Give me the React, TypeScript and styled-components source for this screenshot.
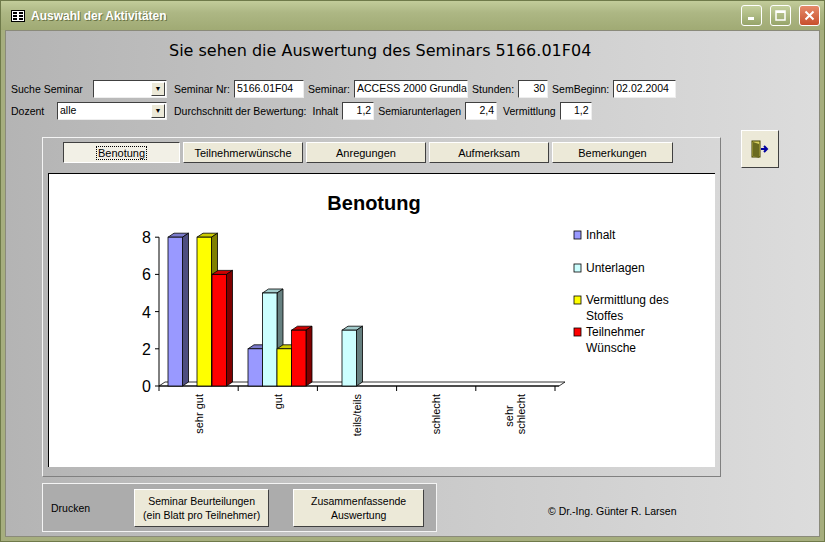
import React from 'react';
import styled, { createGlobalStyle } from 'styled-components';

const Global = createGlobalStyle`
    html, body { margin: 0; padding: 0; }
    body { font-family: "Liberation Sans", Arial, sans-serif; font-size: 10.5px; color: #000; }
`;

const Window = styled.div`
    width: 825px;
    height: 542px;
    box-sizing: border-box;
    background: #a6ae7e;
    border: 1px solid #6f7a4a;
    display: flex;
    flex-direction: column;
`;

const TitleBar = styled.div`
    height: 29px;
    flex: none;
    display: flex;
    align-items: center;
    padding: 0 4px 0 10px;
    background: linear-gradient(#c2cc9a, #adb784 40%, #a0aa74);
    color: #fff;
    font-weight: bold;
    font-size: 12px;
    text-shadow: 1px 1px 0 #6b7446;
    gap: 6px;
`;

const TitleText = styled.span`
    flex: 1;
`;

const CtlButton = styled.div<{ $close?: boolean }>`
    width: 21px;
    height: 21px;
    box-sizing: border-box;
    border: 1px solid #fff;
    border-radius: 3px;
    margin-left: 2px;
    background: ${p => (p.$close ? 'linear-gradient(#e58a6a, #c8502c)' : 'linear-gradient(#c4cf9c, #96a46a)')};
    display: flex;
    align-items: center;
    justify-content: center;
`;

const Body = styled.div`
    flex: 1;
    margin: 0 4px 4px 4px;
    border: 1px solid #8a8a7a;
    background: linear-gradient(90deg, #b4b4b4, #c9c9c9 50%, #dcdcdc);
    padding: 8px 0 0 5px;
    display: flex;
    flex-direction: column;
`;

const Heading = styled.div`
    font-family: "DejaVu Sans", sans-serif;
    font-size: 16px;
    margin: 2px 0 0 158px;
    height: 28px;
`;

const FieldRow = styled.div<{ $top: number }>`
    display: flex;
    align-items: center;
    gap: 4px;
    height: 19px;
    margin-top: ${p => p.$top}px;
`;

const Label = styled.span<{ $w?: number }>`
    width: ${p => (p.$w ? p.$w + 'px' : 'auto')};
    white-space: nowrap;
`;

const Input = styled.div<{ $w: number; $right?: boolean }>`
    width: ${p => p.$w}px;
    height: 18px;
    box-sizing: border-box;
    background: #fff;
    border-top: 1px solid #404040;
    border-left: 1px solid #404040;
    border-right: 1px solid #eeeeee;
    border-bottom: 1px solid #eeeeee;
    padding: 1px 2px;
    text-align: ${p => (p.$right ? 'right' : 'left')};
    overflow: hidden;
    white-space: nowrap;
`;

const Combo = styled(Input)`
    display: flex;
    justify-content: space-between;
    padding-right: 1px;
`;

const ComboArrow = styled.div`
    width: 14px;
    height: 14px;
    background: #ece9d8;
    border: 1px solid #fff;
    border-right-color: #404040;
    border-bottom-color: #404040;
    box-sizing: border-box;
    display: flex;
    align-items: center;
    justify-content: center;
    font-size: 7px;
`;

const Middle = styled.div`
    display: flex;
    margin-top: 17px;
    margin-left: 31px;
    gap: 20px;
`;

const TabFrame = styled.div`
    width: 679px;
    height: 340px;
    box-sizing: border-box;
    border: 1px solid #f4f4f4;
    border-right-color: #808080;
    border-bottom-color: #808080;
    padding: 4px 5px 0 5px;
    display: flex;
    flex-direction: column;
`;

const Tabs = styled.div`
    display: flex;
    gap: 3px;
    margin-left: 15px;
    height: 21px;
`;

const Tab = styled.div<{ $active?: boolean; $w: number }>`
    width: ${p => p.$w}px;
    height: 21px;
    box-sizing: border-box;
    background: ${p => (p.$active ? '#f2f0e6' : '#ece9d8')};
    border: 1px solid ${p => (p.$active ? '#404040' : '#fff')};
    border-right-color: ${p => (p.$active ? '#fff' : '#404040')};
    border-bottom-color: ${p => (p.$active ? '#fff' : '#404040')};
    display: flex;
    align-items: center;
    justify-content: center;
    font-size: 11px;
    span {
        outline: ${p => (p.$active ? '1px dotted #000' : 'none')};
        padding: 0 1px;
    }
`;

const ChartArea = styled.div`
    margin-top: 10px;
    width: 667px;
    height: 294px;
    background: #fff;
    box-sizing: border-box;
    border-top: 1px solid #000;
    border-left: 1px solid #000;
`;

const ExitButton = styled.div`
    width: 38px;
    height: 38px;
    margin-top: -7px;
    box-sizing: border-box;
    background: #ece9d8;
    border: 1px solid #fff;
    border-right-color: #404040;
    border-bottom-color: #404040;
    display: flex;
    align-items: center;
    justify-content: center;
`;

const Bottom = styled.div`
    display: flex;
    align-items: center;
    margin: 6px 0 0 31px;
`;

const PrintFrame = styled.div`
    width: 395px;
    height: 49px;
    box-sizing: border-box;
    border: 1px solid #f4f4f4;
    background: #acacac;
    display: flex;
    align-items: center;
    padding-left: 8px;
`;

const PushButton = styled.div<{ $w: number; $ml: number }>`
    width: ${p => p.$w}px;
    height: 38px;
    margin-left: ${p => p.$ml}px;
    box-sizing: border-box;
    background: #ece9d8;
    border: 1px solid #fff;
    border-right-color: #404040;
    border-bottom-color: #404040;
    display: flex;
    align-items: center;
    justify-content: center;
    text-align: center;
    line-height: 14px;
`;

const Copyright = styled.div`
    margin-left: 111px;
    margin-top: 6px;
`;

const X0 = 110;
const Y0 = 212;
const U = 18.6;
const BW = 14.5;

const colors: Record<string, [string, string, string]> = {
    blue: ['#9999ff', '#7a7acc', '#4d4d80'],
    cyan: ['#ccffff', '#a3cccc', '#668080'],
    yellow: ['#ffff00', '#cccc00', '#808000'],
    red: ['#ff0000', '#cc0000', '#800000'],
};

const bars: { x: number; v: number; c: string }[] = [
    { x: 119, v: 8, c: 'blue' },
    { x: 148, v: 8, c: 'yellow' },
    { x: 163, v: 6, c: 'red' },
    { x: 199, v: 2, c: 'blue' },
    { x: 213.5, v: 5, c: 'cyan' },
    { x: 228, v: 2, c: 'yellow' },
    { x: 242.5, v: 3, c: 'red' },
    { x: 293, v: 3, c: 'cyan' },
];

function Bar({ x, v, c }: { x: number; v: number; c: string }) {
    const [front, top, side] = colors[c];
    const h = v * U;
    const y = Y0 - h;
    return <g stroke='#000' strokeWidth={0.8}>
        <polygon points={`${x},${y} ${x + 6},${y - 4} ${x + BW + 6},${y - 4} ${x + BW},${y}`} fill={top} />
        <polygon points={`${x + BW},${y} ${x + BW + 6},${y - 4} ${x + BW + 6},${Y0 - 4} ${x + BW},${Y0}`} fill={side} />
        <rect x={x} y={y} width={BW} height={h} fill={front} />
    </g>;
}

function Chart() {
    const cats = ['sehr gut', 'gut', 'teils/teils', 'schlecht', 'sehr schlecht'];
    return <svg width={665} height={292} style={{ display: 'block' }}>
        <text x={325} y={36} fontSize={20} fontWeight='bold' textAnchor='middle' fontFamily='Liberation Sans, Arial'>Benotung</text>
        <line x1={X0} y1={Y0 - 8 * U} x2={X0} y2={Y0} stroke='#000' />
        {[0, 2, 4, 6, 8].map(v => <g key={v}>
            <line x1={X0 - 4} y1={Y0 - v * U} x2={X0} y2={Y0 - v * U} stroke='#000' />
            <text x={X0 - 8} y={Y0 - v * U + 6} fontSize={16} textAnchor='end' fontFamily='Liberation Sans, Arial'>{v}</text>
        </g>)}
        <polygon points={`${X0},${Y0} ${X0 + 6},${Y0 - 4} ${X0 + 406},${Y0 - 4} ${X0 + 400},${Y0}`} fill='#fff' stroke='#000' strokeWidth={0.8} />
        <line x1={X0} y1={Y0} x2={X0 + 400} y2={Y0} stroke='#000' />
        {[0, 1, 2, 3, 4, 5].map(i => <line key={i} x1={X0 + i * 79.2} y1={Y0} x2={X0 + i * 79.2} y2={Y0 + 5} stroke='#000' />)}
        {bars.map((b, i) => <Bar key={i} {...b} />)}
        {cats.map((c, i) => {
            const cx = X0 + 39.6 + i * 79.2;
            const parts = c === 'sehr schlecht' ? ['sehr', 'schlecht'] : [c];
            return <text key={c} transform={`translate(${cx},${Y0 + 8}) rotate(-90)`} fontSize={11} textAnchor='end' fontFamily='Liberation Sans, Arial'>
                {parts.map((p, j) => <tspan key={p} x={0} dy={j === 0 ? (parts.length > 1 ? -2 : 4) : 12} textAnchor={parts.length > 1 && j === 0 ? 'middle' : 'end'} dx={parts.length > 1 && j === 0 ? -22 : 0}>{p}</tspan>)}
            </text>;
        })}
        {[
            { y: 61, c: 'blue', t: ['Inhalt'] },
            { y: 94, c: 'cyan', t: ['Unterlagen'] },
            { y: 126, c: 'yellow', t: ['Vermittlung des', 'Stoffes'] },
            { y: 158, c: 'red', t: ['Teilnehmer', 'Wünsche'] },
        ].map(l => <g key={l.c}>
            <rect x={525} y={l.y - 4} width={7} height={8} fill={colors[l.c][0]} stroke='#000' strokeWidth={0.8} />
            <text x={537} y={l.y + 4} fontSize={12} fontFamily='Liberation Sans, Arial'>
                {l.t.map((t, j) => <tspan key={t} x={537} dy={j ? 16 : 0}>{t}</tspan>)}
            </text>
        </g>)}
    </svg>;
}

export default function App(): React.JSX.Element {
    const tabs = [
        ['Benotung', 117], ['Teilnehmerwünsche', 120], ['Anregungen', 120], ['Aufmerksam', 120], ['Bemerkungen', 121],
    ] as const;
    return <>
        <Global />
        <Window>
            <TitleBar>
                <svg width={14} height={12}>
                    <rect x={0.5} y={0.5} width={13} height={11} fill='#fff' stroke='#000' />
                    <rect x={2} y={2} width={4} height={2} fill='#000' />
                    <rect x={8} y={2} width={4} height={2} fill='#000' />
                    <rect x={2} y={5} width={4} height={2} fill='#000' />
                    <rect x={8} y={5} width={4} height={2} fill='#000' />
                    <rect x={2} y={8} width={4} height={2} fill='#000' />
                    <rect x={8} y={8} width={4} height={2} fill='#000' />
                </svg>
                <TitleText>Auswahl der Aktivitäten</TitleText>
                <CtlButton><svg width={11} height={11}><rect x={2} y={7} width={6} height={3} fill='#fff' /></svg></CtlButton>
                <CtlButton><svg width={11} height={11}><rect x={1} y={1} width={9} height={9} fill='none' stroke='#fff' strokeWidth={1.5} /><rect x={1} y={1} width={9} height={2} fill='#fff' /></svg></CtlButton>
                <CtlButton $close><svg width={11} height={11}><path d='M1.5 1.5L9.5 9.5M9.5 1.5L1.5 9.5' stroke='#fff' strokeWidth={2} /></svg></CtlButton>
            </TitleBar>
            <Body>
                <Heading>Sie sehen die Auswertung des Seminars 5166.01F04</Heading>
                <FieldRow $top={10}>
                    <Label $w={78}>Suche Seminar</Label>
                    <Combo $w={74}><span /><ComboArrow>▼</ComboArrow></Combo>
                    <Label style={{ marginLeft: 3 }}>Seminar Nr:</Label>
                    <Input $w={70}>5166.01F04</Input>
                    <Label>Seminar:</Label>
                    <Input $w={114}>ACCESS 2000 Grundlagen</Input>
                    <Label>Stunden:</Label>
                    <Input $w={30} $right>30</Input>
                    <Label>SemBeginn:</Label>
                    <Input $w={63}>02.02.2004</Input>
                </FieldRow>
                <FieldRow $top={3}>
                    <Label $w={42}>Dozent</Label>
                    <Combo $w={110}><span>alle</span><ComboArrow>▼</ComboArrow></Combo>
                    <Label style={{ marginLeft: 3 }}>Durchschnitt der Bewertung:</Label>
                    <Label style={{ marginLeft: 2 }}>Inhalt</Label>
                    <Input $w={32} $right>1,2</Input>
                    <Label>Semiarunterlagen</Label>
                    <Input $w={32} $right>2,4</Input>
                    <Label style={{ marginLeft: 2 }}>Vermittlung</Label>
                    <Input $w={32} $right>1,2</Input>
                </FieldRow>
                <Middle>
                    <TabFrame>
                        <Tabs>
                            {tabs.map(([t, w], i) => <Tab key={t} $w={w} $active={i === 0}><span>{t}</span></Tab>)}
                        </Tabs>
                        <ChartArea><Chart /></ChartArea>
                    </TabFrame>
                    <ExitButton>
                        <svg width={20} height={20}>
                            <rect x={2} y={2} width={8} height={16} fill='#d8d060' stroke='#404000' />
                            <polygon points='3,3 9,5 9,19 3,17' fill='#6b6b20' />
                            <path d='M11 10H17M14 7L17 10L14 13' stroke='#0000a0' strokeWidth={2} fill='none' />
                        </svg>
                    </ExitButton>
                </Middle>
                <Bottom>
                    <PrintFrame>
                        <span>Drucken</span>
                        <PushButton $w={135} $ml={44}>Seminar Beurteilungen<br />(ein Blatt pro Teilnehmer)</PushButton>
                        <PushButton $w={131} $ml={24}>Zusammenfassende<br />Auswertung</PushButton>
                    </PrintFrame>
                    <Copyright>© Dr.-Ing. Günter R. Larsen</Copyright>
                </Bottom>
            </Body>
        </Window>
    </>;
}
